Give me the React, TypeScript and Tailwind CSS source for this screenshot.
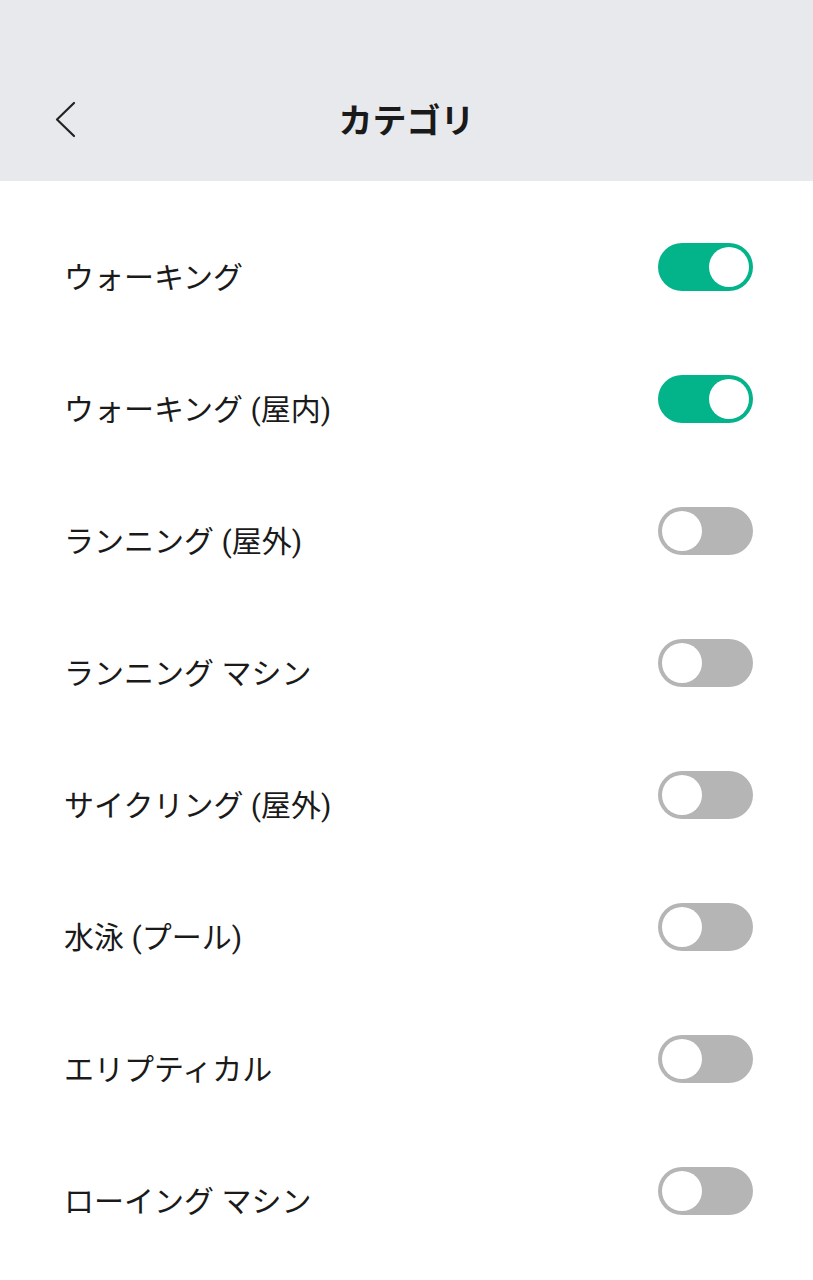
import { useState } from 'react';

const categories = [
  { name: 'ウォーキング', on: true },
  { name: 'ウォーキング (屋内)', on: true },
  { name: 'ランニング (屋外)', on: false },
  { name: 'ランニング マシン', on: false },
  { name: 'サイクリング (屋外)', on: false },
  { name: '水泳 (プール)', on: false },
  { name: 'エリプティカル', on: false },
  { name: 'ローイング マシン', on: false },
];

const Toggle = ({ on, onClick }: { on: boolean; onClick: () => void }) => (
  <button
    onClick={onClick}
    className={`flex h-[48px] w-[95px] items-center rounded-full p-[4px] ${
      on ? 'justify-end bg-[#03b38a]' : 'justify-start bg-[#b5b5b5]'
    }`}
  >
    <span className="block h-[40px] w-[40px] rounded-full bg-white" />
  </button>
);

export default function App() {
  const [items, setItems] = useState(categories);

  const toggle = (i: number) =>
    setItems((prev) => prev.map((it, j) => (j === i ? { ...it, on: !it.on } : it)));

  return (
    <div
      className="min-h-[1280px] w-full bg-white text-[#1a1a1a]"
      style={{ fontFamily: 'Roboto, "Noto Sans CJK JP", sans-serif' }}
    >
      <header className="relative flex h-[181px] items-center justify-center bg-[#e8e9ec] pt-[60px]">
        <button className="absolute left-[52px] top-[101px]">
          <svg width="26" height="37" viewBox="0 0 26 37" fill="none">
            <polyline
              points="22,2 5,18.5 22,35"
              stroke="#222"
              strokeWidth="2.2"
              strokeLinecap="round"
              strokeLinejoin="round"
            />
          </svg>
        </button>
        <h1 className="text-[34px] font-bold leading-none text-[#1a1a1a]">カテゴリ</h1>
      </header>

      <ul className="pt-[20px]">
        {items.map((it, i) => (
          <li key={it.name} className="flex h-[132px] items-center justify-between pl-[64px] pr-[60px]">
            <span className="pt-[22px] text-[30px] leading-none">{it.name}</span>
            <Toggle on={it.on} onClick={() => toggle(i)} />
          </li>
        ))}
      </ul>
    </div>
  );
}
